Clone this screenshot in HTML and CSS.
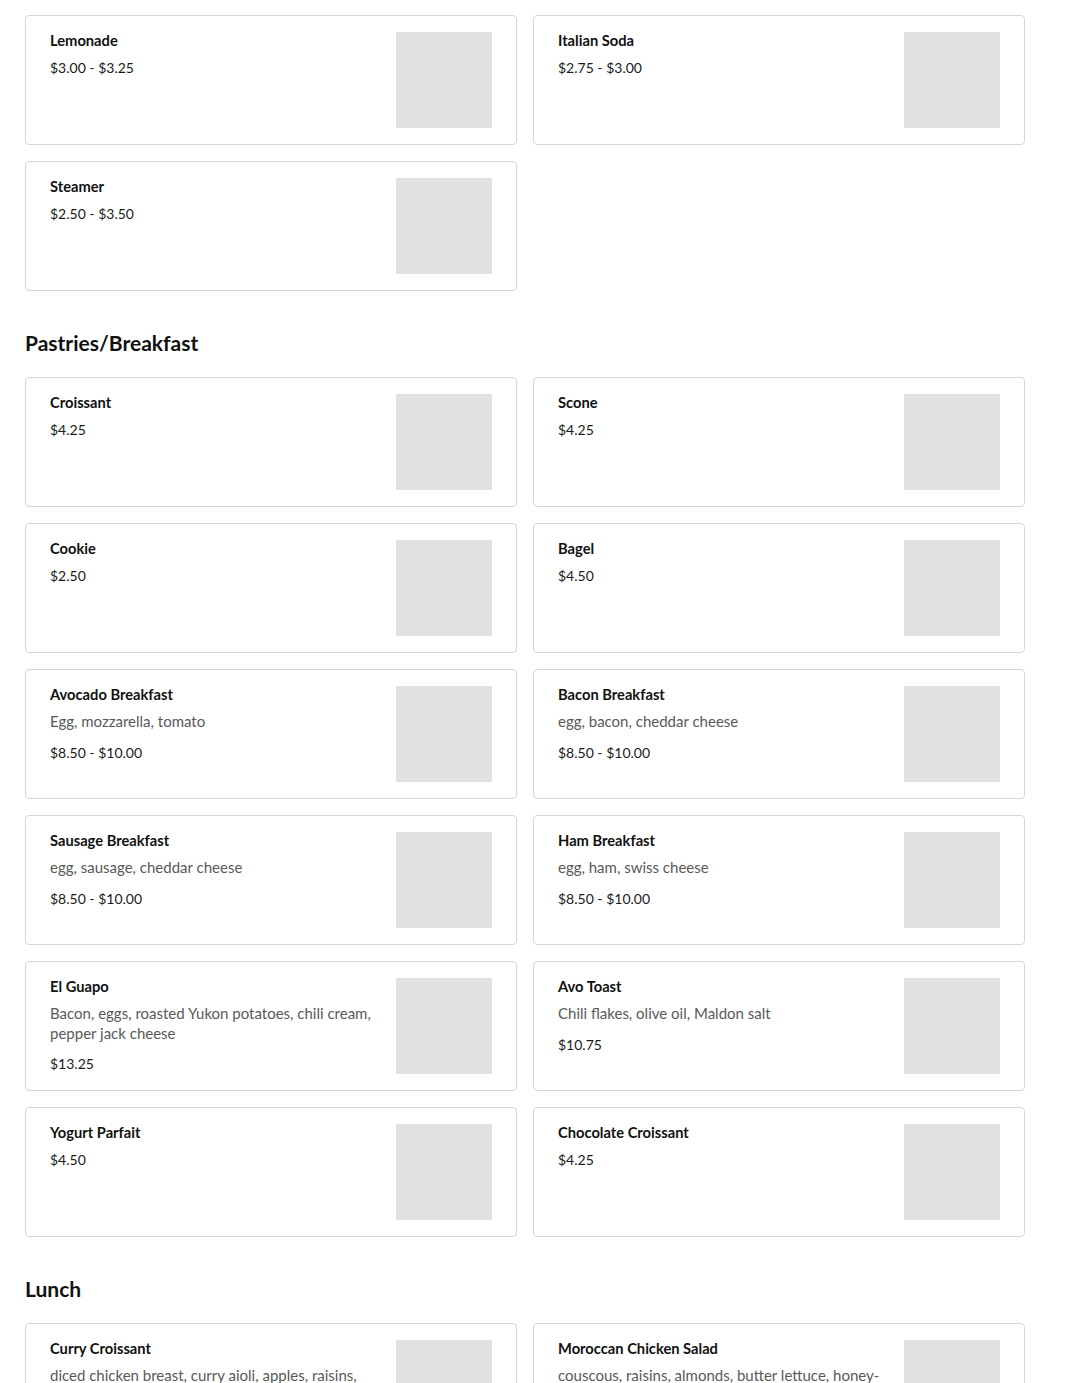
FILE: index.html
```html
<!DOCTYPE html>
<html lang="en">
<head>
<meta charset="utf-8">
<title>Menu</title>
<link rel="stylesheet" href="styles.css">
</head>
<body>
<main class="menu">
  <section class="section">
    <div class="grid">
      <div class="card"><div class="info"><div class="name">Lemonade</div><div class="price">$3.00 - $3.25</div></div><div class="thumb"></div></div>
      <div class="card"><div class="info"><div class="name">Italian Soda</div><div class="price">$2.75 - $3.00</div></div><div class="thumb"></div></div>
      <div class="card"><div class="info"><div class="name">Steamer</div><div class="price">$2.50 - $3.50</div></div><div class="thumb"></div></div>
    </div>
  </section>
  <section class="section">
    <h2 class="heading">Pastries/Breakfast</h2>
    <div class="grid">
      <div class="card"><div class="info"><div class="name">Croissant</div><div class="price">$4.25</div></div><div class="thumb"></div></div>
      <div class="card"><div class="info"><div class="name">Scone</div><div class="price">$4.25</div></div><div class="thumb"></div></div>
      <div class="card"><div class="info"><div class="name">Cookie</div><div class="price">$2.50</div></div><div class="thumb"></div></div>
      <div class="card"><div class="info"><div class="name">Bagel</div><div class="price">$4.50</div></div><div class="thumb"></div></div>
      <div class="card"><div class="info"><div class="name">Avocado Breakfast</div><div class="desc">Egg, mozzarella, tomato</div><div class="price">$8.50 - $10.00</div></div><div class="thumb"></div></div>
      <div class="card"><div class="info"><div class="name">Bacon Breakfast</div><div class="desc">egg, bacon, cheddar cheese</div><div class="price">$8.50 - $10.00</div></div><div class="thumb"></div></div>
      <div class="card"><div class="info"><div class="name">Sausage Breakfast</div><div class="desc">egg, sausage, cheddar cheese</div><div class="price">$8.50 - $10.00</div></div><div class="thumb"></div></div>
      <div class="card"><div class="info"><div class="name">Ham Breakfast</div><div class="desc">egg, ham, swiss cheese</div><div class="price">$8.50 - $10.00</div></div><div class="thumb"></div></div>
      <div class="card"><div class="info"><div class="name">El Guapo</div><div class="desc">Bacon, eggs, roasted Yukon potatoes, chili cream, pepper jack cheese</div><div class="price">$13.25</div></div><div class="thumb"></div></div>
      <div class="card"><div class="info"><div class="name">Avo Toast</div><div class="desc">Chili flakes, olive oil, Maldon salt</div><div class="price">$10.75</div></div><div class="thumb"></div></div>
      <div class="card"><div class="info"><div class="name">Yogurt Parfait</div><div class="price">$4.50</div></div><div class="thumb"></div></div>
      <div class="card"><div class="info"><div class="name">Chocolate Croissant</div><div class="price">$4.25</div></div><div class="thumb"></div></div>
    </div>
  </section>
  <section class="section">
    <h2 class="heading">Lunch</h2>
    <div class="grid">
      <div class="card"><div class="info"><div class="name">Curry Croissant</div><div class="desc">diced chicken breast, curry aioli, apples, raisins, celery, croissant</div><div class="price">$12.50</div></div><div class="thumb"></div></div>
      <div class="card"><div class="info"><div class="name">Moroccan Chicken Salad</div><div class="desc">couscous, raisins, almonds, butter lettuce, honey-lemon dressing</div><div class="price">$13.50</div></div><div class="thumb"></div></div>
    </div>
  </section>
</main>
</body>
</html>
```

FILE: styles.css
```css
html, body {
  margin: 0;
  padding: 0;
  background: #ffffff;
}

body {
  font-family: Lato, "Open Sans", "Liberation Sans", sans-serif;
  color: #1a1a1a;
}

.menu {
  width: 1000px;
  padding: 15px 0 40px 25px;
}

.section + .section {
  margin-top: 40px;
}

.heading {
  margin: 0 0 22px 0;
  font-size: 21px;
  line-height: 24px;
  font-weight: 700;
  color: #111111;
}

.grid {
  display: grid;
  grid-template-columns: 1fr 1fr;
  gap: 16px;
}

.card {
  display: flex;
  gap: 16px;
  border: 1px solid #d6d6d6;
  border-radius: 4px;
  padding: 16px 24px;
  min-height: 96px;
}

.info {
  flex: 1;
  min-width: 0;
}

.name {
  font-size: 14.7px;
  line-height: 16px;
  font-weight: 700;
  color: #111111;
}

.desc {
  margin-top: 10px;
  font-size: 15px;
  line-height: 19.5px;
  color: #595959;
}

.price {
  margin-top: 13px;
  font-size: 14px;
  line-height: 16px;
  color: #1a1a1a;
}

.info > .name + .price {
  margin-top: 12px;
}

.thumb {
  width: 96px;
  height: 96px;
  flex: none;
  background: #e2e2e2;
}
```
